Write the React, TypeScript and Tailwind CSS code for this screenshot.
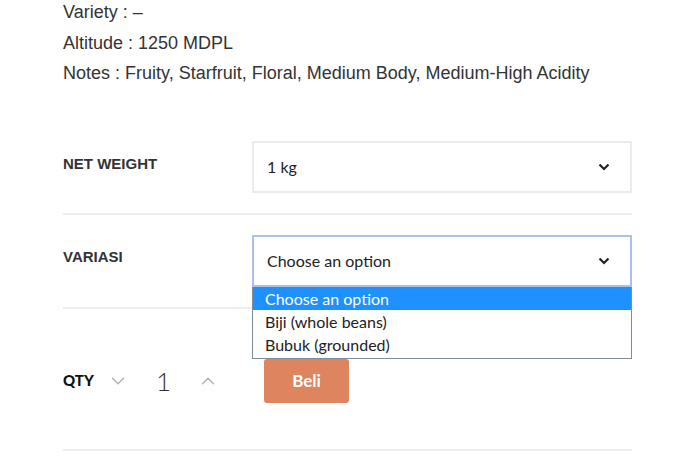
import { ChevronDown, ChevronUp } from "lucide-react";

const sans = { fontFamily: '"Liberation Sans", Arial, sans-serif' };

function Chevron() {
  return (
    <svg width="12" height="8" viewBox="0 0 12 8" className="text-[#222]">
      <path d="M1.5 1.5 L6 6 L10.5 1.5" fill="none" stroke="currentColor" strokeWidth="2.2" />
    </svg>
  );
}

export default function App() {
  return (
    <div className="w-[676px] h-[460px] bg-white overflow-hidden relative">
      <div className="pl-[63px] w-[632px]">
        <div className="font-['Liberation_Sans',Arial,sans-serif] text-[18px] text-[#333] leading-[30.5px] -mt-[3px]">
          <p>Variety : –</p>
          <p>Altitude : 1250 MDPL</p>
          <p>Notes : Fruity, Starfruit, Floral, Medium Body, Medium-High Acidity</p>
        </div>

        <div className="mt-[52px] flex items-start pb-[20px] border-b-2 border-[#eeeeee]">
          <div className="w-[189px] pt-[12px] text-[15px] font-bold text-[#333]" style={sans}>
            NET WEIGHT
          </div>
          <div className="flex-1 h-[52px] border-2 border-[#ebebeb] flex items-center justify-between pl-[13px] pr-[20px] font-['Lato',sans-serif] text-[16px] text-[#222]">
            <span className="pt-[1px]">1 kg</span>
            <Chevron />
          </div>
        </div>

        <div className="mt-[20px] flex items-start pb-[20px] border-b-2 border-[#eeeeee]">
          <div className="w-[189px] pt-[11px] text-[15px] font-bold text-[#333]" style={sans}>
            VARIASI
          </div>
          <div className="flex-1 relative">
            <div className="h-[52px] border-2 border-[#a9c1e8] flex items-center justify-between pl-[13px] pr-[20px] font-['Lato',sans-serif] text-[16px] text-[#222]">
              <span className="pt-[1px]">Choose an option</span>
              <Chevron />
            </div>
            <div className="absolute left-0 right-0 top-[52px] z-10 bg-white border border-[#7f8c99] border-t-0 font-['Lato',sans-serif] text-[16px] text-[#222] leading-[23px]">
              <div className="bg-[#1e90ff] text-white pl-[12px]">Choose an option</div>
              <div className="pl-[12px]">Biji (whole beans)</div>
              <div className="pl-[12px] pb-[2px]">Bubuk (grounded)</div>
            </div>
          </div>
        </div>

        <div className="mt-[50px] flex items-center pb-[46px] border-b-2 border-[#eeeeee]">
          <span className="font-['Lato',sans-serif] text-[15px] font-black text-[#111] w-[44px]">QTY</span>
          <ChevronDown size={22} strokeWidth={1.5} className="text-[#b0b0b0]" />
          <span className="font-['Lato',sans-serif] font-light text-[26px] leading-none text-[#333] ml-[27px] w-[41px]">1</span>
          <ChevronUp size={22} strokeWidth={1.5} className="text-[#b0b0b0]" />
          <button className="ml-[45px] w-[85px] h-[44px] rounded-[3px] bg-[#de8560] text-white font-['Lato',sans-serif] font-bold text-[17px]">
            Beli
          </button>
        </div>
      </div>
    </div>
  );
}
